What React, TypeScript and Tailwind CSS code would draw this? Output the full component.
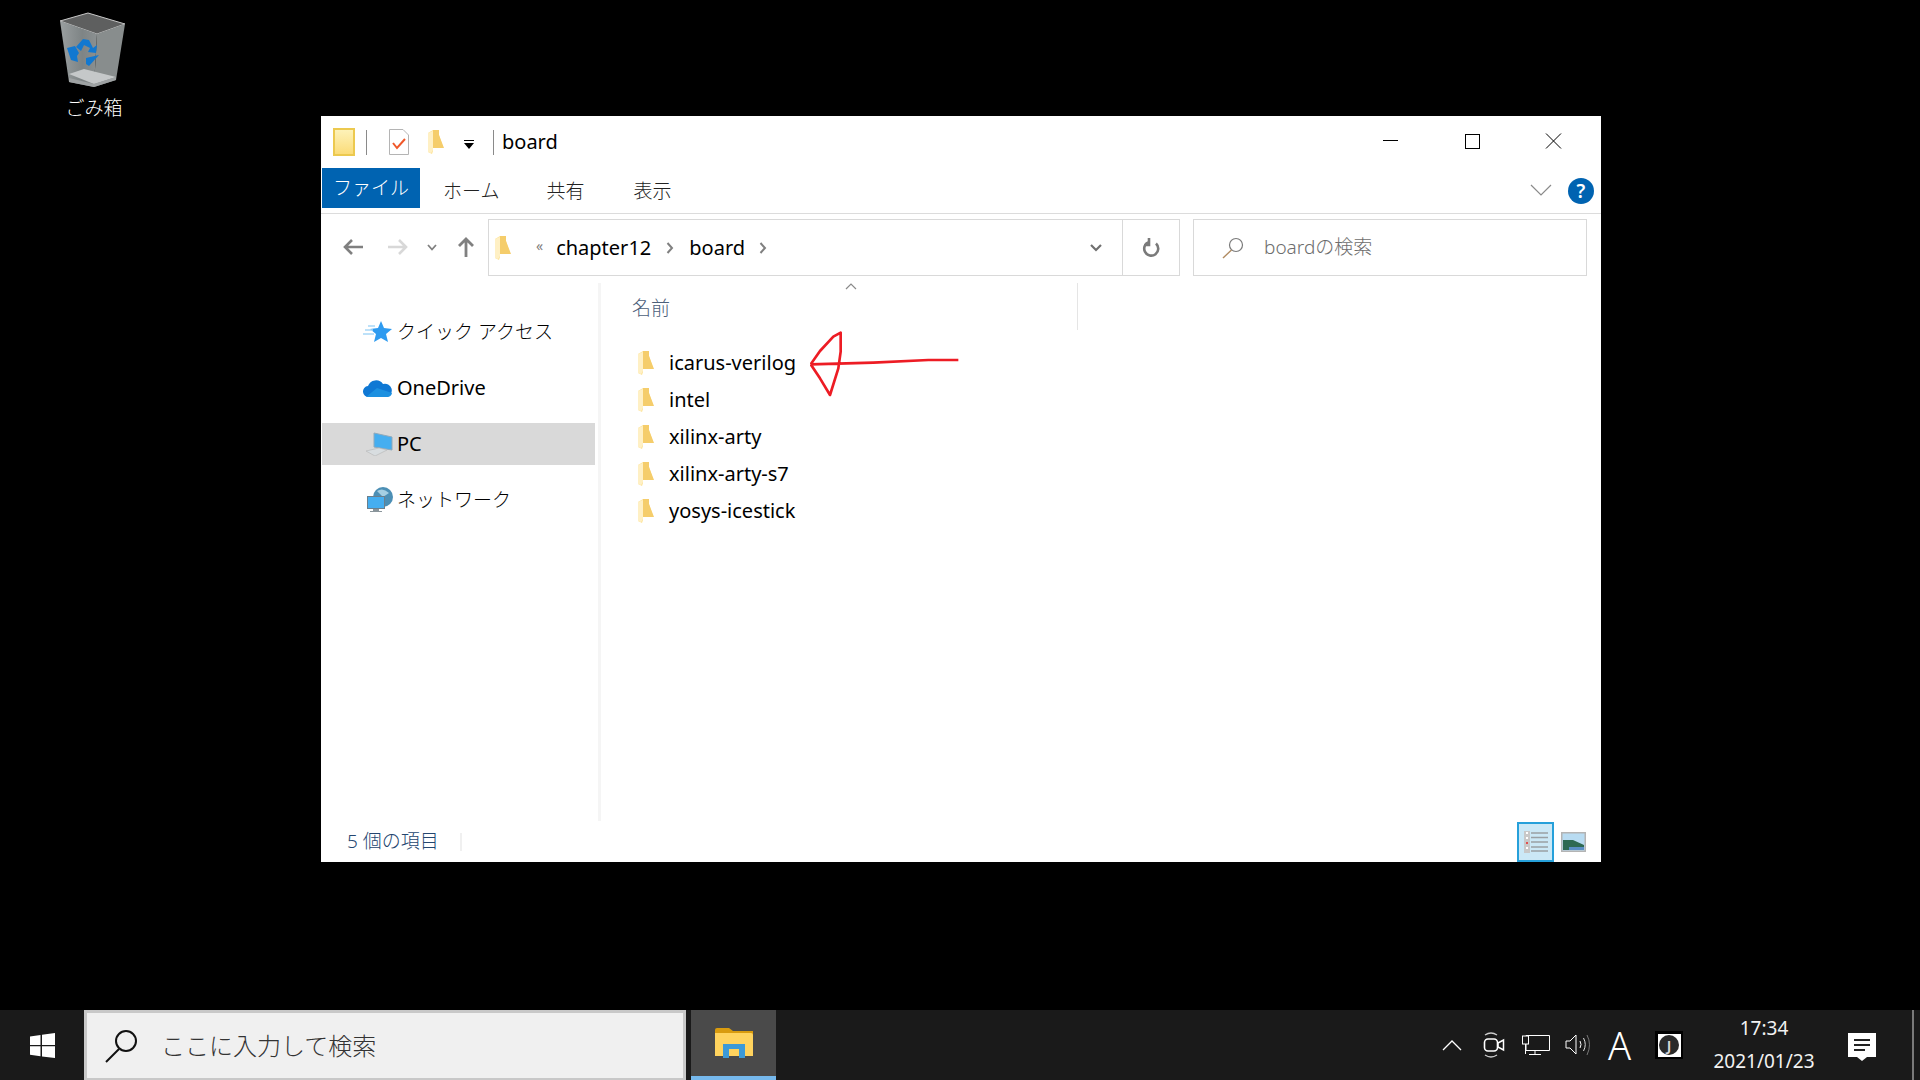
import React from "react";

const FILES = ["icarus-verilog", "intel", "xilinx-arty", "xilinx-arty-s7", "yosys-icestick"];

const FolderIcon = () => (
  <svg width="16" height="24" viewBox="0 0 16 24" className="block">
    <path d="M0 3 L5 0 H11 V5 L15 17 V18 H5 V21 L4 24 L0 22 Z" fill="#fde49a" />
    <path d="M5 0 H11 V5 L16 18 H5 Z" fill="#f5cd6b" />
    <path d="M0 3 L5 1 V20 L3 23 L0 22 Z" fill="#fff0c4" />
  </svg>
);

const RecycleBin = () => (
  <svg width="70" height="76" viewBox="0 0 70 76" className="block">
    <defs>
      <linearGradient id="binBody" x1="0" y1="0" x2="1" y2="0">
        <stop offset="0" stopColor="#9a9fa0" />
        <stop offset="0.6" stopColor="#7e8485" />
        <stop offset="1" stopColor="#8b9091" />
      </linearGradient>
    </defs>
    <path d="M1 9 L29 1 L66 12 L38 22 Z" fill="#5e5f5f" stroke="#c8c8c8" strokeWidth="1" />
    <path d="M1 9 L38 22 L35 75 L10 70 Z" fill="url(#binBody)" />
    <path d="M38 22 L66 12 L57 68 L35 75 Z" fill="#888d8d" />
    <path d="M10 62 L25 57 L57 65 L35 72 Z" fill="#c5c8c9" />
    <path d="M10 66 L35 72 L57 65 L57 68 L35 75 L10 70 Z" fill="#9ea2a3" />
    <path d="M17 35 L24 27 L30 28 L34 36 L38 33 L37 41 L29 40 L31 36 L25 33 L22 39 Z" fill="#1278d0" />
    <path d="M8 36 L16 34 L20 41 L18 44 L19 50 L12 48 Z" fill="#1278d0" />
    <path d="M27 46 L40 43 L30 54 L27 52 Z" fill="#1278d0" />
  </svg>
);

const Arrow = () => (
  <svg width="152" height="68" viewBox="0 0 456 204" className="block">
    <path
      d="M2 100 L190 95 L355 87 L445 87 M2 100 L30 60 L70 17 L92 5 L92 62 L85 112 L60 192 L30 142 L2 100"
      fill="none"
      stroke="#ed1c24"
      strokeWidth="8"
      strokeLinejoin="round"
    />
  </svg>
);

export default function App() {
  return (
    <div className="flex h-screen w-full flex-col overflow-hidden bg-black font-['Noto_Sans','Noto_Sans_CJK_JP',sans-serif]">
      <div className="relative flex-1">
        {/* desktop icon */}
        <div className="absolute left-[44px] top-[12px] flex w-[100px] flex-col items-center">
          <RecycleBin />
          <span className="mt-[7px] text-[19px] leading-[26px] font-light text-white">ごみ箱</span>
        </div>

        {/* explorer window */}
        <div className="absolute left-[321px] top-[116px] flex h-[746px] w-[1280px] flex-col bg-white text-[20px] text-black">
          <div className="flex h-[52px] shrink-0 items-center">
            <div className="ml-[12px] h-[28px] w-[22px] border-2 border-[#ecc94f] bg-gradient-to-b from-[#fdf2b8] to-[#fbdc78]" />
            <div className="ml-[11px] h-[25px] w-px bg-[#8a8a8a]" />
            <svg width="20" height="26" viewBox="0 0 20 26" className="ml-[22px]">
              <path d="M.5.5 H14 L19.5 6 V25.5 H.5 Z" fill="#fff" stroke="#b4b4b4" />
              <path d="M4 14 L8 19 L16 10" fill="none" stroke="#f0582a" strokeWidth="2" />
            </svg>
            <div className="ml-[19px]">
              <FolderIcon />
            </div>
            <svg width="12" height="10" viewBox="0 0 12 10" className="ml-[19px] mt-[6px]">
              <path d="M1 0 H11 V1 H1 Z M1 3 H11 L6 9 Z" fill="#000" />
            </svg>
            <div className="ml-[18px] h-[25px] w-px bg-[#8a8a8a]" />
            <span className="ml-[8px] text-[20px]">board</span>
            <div className="flex-1" />
            <div className="flex h-[52px] items-center">
              <svg width="82" height="20" viewBox="0 0 82 20">
                <path d="M0 8.5 H15" stroke="#000" />
              </svg>
              <svg width="82" height="20" viewBox="0 0 82 20" className="ml-[-1px]">
                <rect x="1.5" y="2.5" width="14" height="14" fill="none" stroke="#000" />
              </svg>
              <svg width="56" height="20" viewBox="0 0 56 20" className="ml-[-1px]">
                <path d="M1 1.5 L16 16.5 M16 1.5 L1 16.5" stroke="#000" />
              </svg>
            </div>
          </div>

          <div className="flex h-[46px] shrink-0 items-start border-b border-[#dcdcdc] pl-px">
            <div className="flex h-[40px] w-[98px] items-center justify-center bg-[#0063b1] text-[19px] font-light text-white">ファイル</div>
            <span className="ml-[23px] mt-[9px] text-[19px] leading-[28px] font-light text-[#222]">ホーム</span>
            <span className="ml-[47px] mt-[9px] text-[19px] leading-[28px] font-light text-[#222]">共有</span>
            <span className="ml-[49px] mt-[9px] text-[19px] leading-[28px] font-light text-[#222]">表示</span>
            <div className="flex-1" />
            <svg width="22" height="14" viewBox="0 0 22 14" className="mt-[15px]">
              <path d="M1 2 L11 12 L21 2" fill="none" stroke="#8a8a8a" strokeWidth="1.2" />
            </svg>
            <div className="ml-[16px] mr-[7px] mt-[10px] flex h-[26px] w-[26px] items-center justify-center rounded-full bg-[#0063b1] text-[19px] leading-none font-semibold text-white">?</div>
          </div>

          <div className="flex h-[69px] shrink-0 items-start pl-[9px] pt-[5px]">
            <div className="flex h-[56px] w-[45px] items-center justify-center">
              <svg width="20" height="16" viewBox="0 0 20 16"><path d="M9 1 L2 8 L9 15 M2 8 H20" fill="none" stroke="#808080" strokeWidth="2.6" /></svg>
            </div>
            <div className="flex h-[56px] w-[45px] items-center justify-center">
              <svg width="20" height="16" viewBox="0 0 20 16"><path d="M11 1 L18 8 L11 15 M0 8 H18" fill="none" stroke="#d8d8d8" strokeWidth="2.6" /></svg>
            </div>
            <div className="flex h-[56px] w-[24px] items-center justify-center">
              <svg width="10" height="7" viewBox="0 0 10 7"><path d="M1 1 L5 5.5 L9 1" fill="none" stroke="#808080" strokeWidth="1.8" /></svg>
            </div>
            <div className="flex h-[56px] w-[44px] items-center justify-center">
              <svg width="16" height="20" viewBox="0 0 16 20"><path d="M1 9 L8 2 L15 9 M8 2 V20" fill="none" stroke="#808080" strokeWidth="2.8" /></svg>
            </div>
            <div className="flex h-[57px] w-[692px] items-center border border-[#d9d9d9]">
              <div className="ml-[6px]">
                <FolderIcon />
              </div>
              <span className="ml-[25px] mt-[-4px] text-[14px] leading-none text-[#808080]">«</span>
              <span className="ml-[13px] text-[20px]">chapter12</span>
              <svg width="8" height="12" viewBox="0 0 8 12" className="ml-[15px]"><path d="M1.5 1 L6 6 L1.5 11" fill="none" stroke="#808080" strokeWidth="2" /></svg>
              <span className="ml-[15px] text-[20px]">board</span>
              <svg width="8" height="12" viewBox="0 0 8 12" className="ml-[14px]"><path d="M1.5 1 L6 6 L1.5 11" fill="none" stroke="#808080" strokeWidth="2" /></svg>
              <div className="flex-1" />
              <svg width="12" height="8" viewBox="0 0 12 8" className="mr-[20px]"><path d="M1 1 L6 6 L11 1" fill="none" stroke="#707070" strokeWidth="2.2" /></svg>
              <div className="flex h-full w-[57px] items-center justify-center border-l border-[#d9d9d9]">
                <svg width="18" height="20" viewBox="0 0 18 20">
                  <path d="M11 4 A7 7 0 1 1 4 5.5 M11 0 V7 H16" fill="none" stroke="#7a7a7a" strokeWidth="2.6" transform="matrix(-1 0 0 1 18 0)" />
                </svg>
              </div>
            </div>
            <div className="ml-[13px] flex h-[57px] w-[394px] items-center border border-[#d9d9d9]">
              <svg width="22" height="22" viewBox="0 0 22 22" className="ml-[28px]">
                <circle cx="14" cy="8" r="6.5" fill="none" stroke="#7a7a7a" strokeWidth="1.2" />
                <path d="M9.5 13 L1 21" stroke="#b08a60" strokeWidth="1.4" />
              </svg>
              <span className="ml-[20px] text-[19px] font-light text-[#6d6d6d]">boardの検索</span>
            </div>
          </div>

          <div className="flex min-h-0 flex-1">
            <div className="flex w-[277px] shrink-0 flex-col gap-[14px] pl-px pr-[3px] pt-[28px]">
              <div className="flex h-[42px] items-center">
                <svg width="30" height="22" viewBox="0 0 30 22" className="ml-[41px]">
                  <path d="M18 0 L21 7 L29 8 L23 13 L25 21 L18 17 L11 21 L13 13 L7 8 L15 7 Z" fill="#2e9bf0" />
                  <path d="M2 9 H10 M5 5 H12 M0 13 H11" stroke="#a8d8f8" strokeWidth="1.3" />
                </svg>
                <span className="ml-[4px] text-[19px] font-light">クイック アクセス</span>
              </div>
              <div className="flex h-[42px] items-center">
                <svg width="30" height="20" viewBox="0 0 30 20" className="ml-[41px]">
                  <path d="M6 19 A5.5 5.5 0 0 1 5 8 A8.5 8.5 0 0 1 20 6 A6.5 6.5 0 0 1 24 19 Z" fill="#0f78d4" />
                  <path d="M3 19 L14 10 L29 15 A5 5 0 0 1 24 19 Z" fill="#1c90e0" />
                </svg>
                <span className="ml-[4px] text-[20px]">OneDrive</span>
              </div>
              <div className="flex h-[42px] items-center bg-[#d9d9d9]">
                <svg width="28" height="24" viewBox="0 0 28 24" className="ml-[43px]">
                  <path d="M9 1 L27 5 V18 L9 15 Z" fill="#45aef0" stroke="#8fa9bb" />
                  <path d="M1 19 L14 16 L22 18 L10 24 Z" fill="#d8dde0" stroke="#b5b5b5" strokeWidth="0.6" />
                </svg>
                <span className="ml-[4px] text-[20px]">PC</span>
              </div>
              <div className="flex h-[42px] items-center">
                <svg width="26" height="26" viewBox="0 0 26 26" className="ml-[45px]">
                  <circle cx="16" cy="10" r="10" fill="#4c8fb5" />
                  <path d="M10 4 Q16 0 22 6 L16 10 Z" fill="#a5cfe3" />
                  <rect x="0.5" y="9.5" width="17" height="12" fill="#45aef0" stroke="#6b7f8c" />
                  <path d="M6 22 H12 V24 H15 V25 H3 V24 H6 Z" fill="#8a959b" />
                </svg>
                <span className="ml-[4px] text-[19px] font-light">ネットワーク</span>
              </div>
            </div>
            <div className="w-[3px] shrink-0 bg-[#f5f5f5]" />
            <div className="relative flex-1">
              <div className="relative flex h-[47px] w-[477px] items-center border-r border-[#e5e5e5] pl-[31px] text-[19px] font-light text-[#4c607a]">
                <span className="mt-[3px]">名前</span>
                <svg width="12" height="7" viewBox="0 0 12 7" className="absolute left-[244px] top-[0px]">
                  <path d="M1 6 L6 1 L11 6" fill="none" stroke="#8a8a8a" strokeWidth="1.2" />
                </svg>
              </div>
              <div className="mt-[14px] flex flex-col">
                {FILES.map((name) => (
                  <div key={name} className="flex h-[37px] items-center pl-[37px]">
                    <FolderIcon />
                    <span className="ml-[15px] text-[20px]">{name}</span>
                  </div>
                ))}
              </div>
              <div className="absolute left-[209px] top-[48px]">
                <Arrow />
              </div>
            </div>
          </div>

          <div className="flex h-[41px] shrink-0 items-center">
            <span className="ml-[26px] text-[19px] font-light text-[#24466f]">5 個の項目</span>
            <div className="ml-[21px] h-[18px] w-[2px] bg-[#f0f0f0]" />
            <div className="flex-1" />
            <div className="flex h-[40px] w-[37px] items-center justify-center border-2 border-[#26a0da] bg-[#cbe8f6]">
              <svg width="24" height="24" viewBox="0 0 24 24">
                <rect x="0" y="1" width="6" height="22" fill="#c8c8c8" />
                <path d="M2 3 H4 M2 8 H4 M2 13 H4 M2 18 H4" stroke="#fff" strokeWidth="2" />
                <path d="M2 13 H4" stroke="#e05050" strokeWidth="2" />
                <path d="M7 3 H24 M7 7.5 H24 M7 12 H24 M7 17 H24 M7 21 H24" stroke="#9aa0a4" strokeWidth="1.5" />
              </svg>
            </div>
            <svg width="25" height="20" viewBox="0 0 25 20" className="ml-[7px] mr-[15px]">
              <rect x="0.75" y="0.75" width="23.5" height="18.5" fill="#b9dcf2" stroke="#b4b4b4" strokeWidth="1.5" />
              <path d="M2 8 L12 8 L23 13 V18 H2 Z" fill="#2f6a52" />
              <path d="M8 15 H23 V18 H8 Z" fill="#5b8fc4" />
            </svg>
          </div>
        </div>
      </div>

      {/* taskbar */}
      <div className="flex h-[70px] shrink-0 items-stretch bg-[#1a1a1a]">
        <div className="flex w-[84px] shrink-0 items-center justify-center">
          <svg width="25" height="25" viewBox="0 0 25 25">
            <path d="M0 3.5 L10.5 2 V12 H0 Z M12 1.8 L25 0 V12 H12 Z M0 13.2 H10.5 V23.2 L0 21.7 Z M12 13.2 H25 V25 L12 23.4 Z" fill="#fff" />
          </svg>
        </div>
        <div className="flex w-[602px] shrink-0 items-center border-[3px] border-b-[2px] border-[#c8c8c8] bg-[#f0f0f0]">
          <svg width="34" height="34" viewBox="0 0 34 34" className="ml-[18px]">
            <circle cx="21" cy="12" r="10" fill="none" stroke="#111" strokeWidth="2" />
            <path d="M14 20 L1 33" stroke="#111" strokeWidth="2" />
          </svg>
          <span className="ml-[22px] text-[24px] font-light text-[#333]">ここに入力して検索</span>
        </div>
        <div className="ml-[5px] flex w-[85px] shrink-0 items-center justify-center border-b-[4px] border-[#76b9ed] bg-[#4a4a4a]">
          <svg width="38" height="30" viewBox="0 0 38 30">
            <path d="M0 2 Q0 0 2 0 H14 L18 3 H38 V7 H0 Z" fill="#d99b0e" />
            <path d="M0 5 H36 Q38 5 38 7 V28 H0 Z" fill="#ffd35e" />
            <path d="M8 25 V16 H30 V30 H24 V21 H14 V30 H8 Z" fill="#3c9ad8" />
          </svg>
        </div>
        <div className="flex-1" />
        <div className="flex items-center text-white">
          <div className="flex w-[42px] justify-center">
            <svg width="20" height="12" viewBox="0 0 20 12"><path d="M1 11 L10 2 L19 11" fill="none" stroke="#fff" strokeWidth="1.3" /></svg>
          </div>
          <div className="flex w-[42px] justify-center">
            <svg width="22" height="28" viewBox="0 0 22 28">
              <rect x="1.5" y="8" width="13" height="12" rx="3.5" fill="none" stroke="#fff" strokeWidth="1.6" />
              <path d="M15 12 L20.5 9 V19 L15 16 Z" fill="none" stroke="#fff" strokeWidth="1.5" />
              <path d="M2 4 Q8 0 14 4 M2 24 Q8 28 14 24" fill="none" stroke="#ccc" strokeWidth="1.3" />
            </svg>
          </div>
          <div className="flex w-[42px] justify-center">
            <svg width="28" height="20" viewBox="0 0 28 20">
              <path d="M4 7 V0.5 H27.5 V15.5 H4 V9 M13 15.5 V19 M7 19.5 H19" fill="none" stroke="#fff" />
              <rect x="0.5" y="1" width="6" height="8" fill="#1a1a1a" stroke="#fff" />
              <path d="M3.5 9 V19" stroke="#fff" />
            </svg>
          </div>
          <div className="flex w-[42px] justify-center">
            <svg width="27" height="22" viewBox="0 0 27 22">
              <path d="M1 7 H5 L11 1 V20 L5 14 H1 Z" fill="none" stroke="#fff" />
              <path d="M15 7 Q17 10.5 15 14" fill="none" stroke="#fff" />
              <path d="M18.5 4 Q22 10.5 18.5 17" fill="none" stroke="#ddd" />
              <path d="M22 1 Q27 10.5 22 21" fill="none" stroke="#777" />
            </svg>
          </div>
          <div className="flex w-[41px] justify-center text-[38px] leading-none font-light">A</div>
          <div className="ml-[8px] flex w-[42px] justify-center">
            <div className="flex h-[28px] w-[28px] items-center justify-center bg-black">
              <div className="flex h-[23px] w-[23px] items-center justify-center bg-white">
                <div className="flex h-[20px] w-[20px] items-center justify-center rounded-full bg-[#2a2a2a] text-[15px] leading-none font-semibold text-[#d8d8d8]">J</div>
              </div>
            </div>
          </div>
          <div className="ml-[15px] flex w-[118px] flex-col items-center text-[19px] leading-[33px] text-[#f2f2f2]">
            <span>17:34</span>
            <span>2021/01/23</span>
          </div>
          <div className="ml-[25px] flex w-[28px] flex-col items-center">
            <div className="relative mt-[4px] flex h-[24px] w-[28px] flex-col items-center justify-center gap-[3px] bg-white">
              <div className="h-[2px] w-[16px] bg-[#222]" />
              <div className="h-[2px] w-[16px] bg-[#222]" />
              <div className="h-[2px] w-[11px] self-start ml-[6px] bg-[#222]" />
            </div>
            <div className="h-0 w-0 border-x-[5px] border-t-[4px] border-x-transparent border-t-white" />
          </div>
          <div className="ml-[36px] h-full w-[2px] bg-[#7a7a7a]" />
          <div className="w-[6px]" />
        </div>
      </div>
    </div>
  );
}
